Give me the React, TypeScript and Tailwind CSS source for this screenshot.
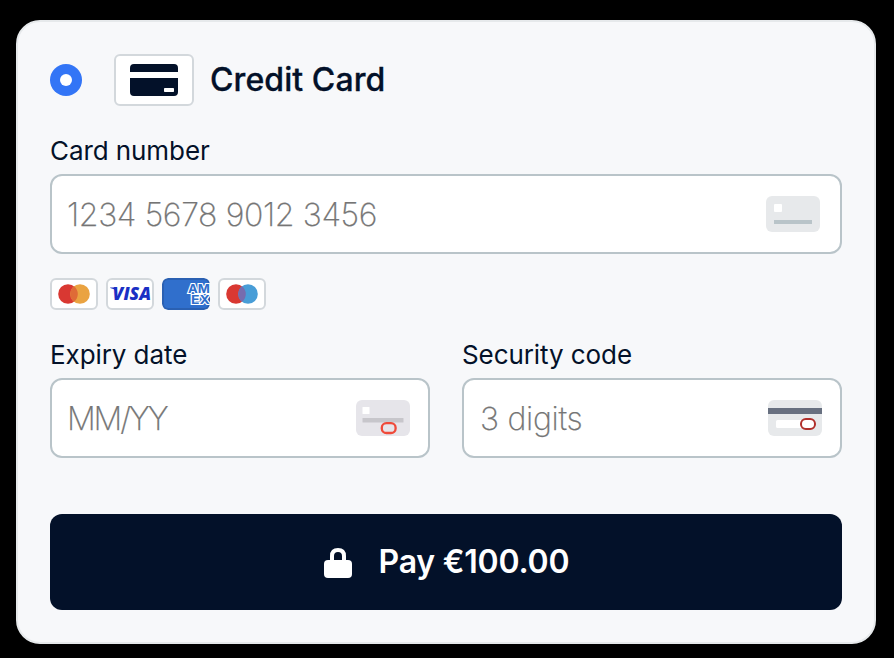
import type { ReactNode } from "react";

function CardChip() {
  return (
    <div className="flex h-[52px] w-20 items-center justify-center rounded-md border-2 border-[#d3d8dc] bg-white">
      <svg width="48" height="32" viewBox="0 0 48 32">
        <path d="M4 0H44Q48 0 48 4V8H0V4Q0 0 4 0ZM0 14H48V28Q48 32 44 32H4Q0 32 0 28Z" fill="#031129" />
        <rect x="34" y="24" width="10" height="4" rx="0.7" fill="#fff" />
      </svg>
    </div>
  );
}

function BrandFrame({ children }: { children: ReactNode }) {
  return (
    <div className="h-8 w-12 overflow-hidden rounded-md border-2 border-[#d3d8dc] bg-white">
      {children}
    </div>
  );
}

function Circles({ right, overlap }: { right: string; overlap: string }) {
  return (
    <svg width="44" height="28" viewBox="0 0 44 28">
      <circle cx="16" cy="14" r="9.8" fill="#d93832" />
      <circle cx="28" cy="14" r="9.8" fill={right} />
      <path d="M22 6.25A9.8 9.8 0 0 1 22 21.75A9.8 9.8 0 0 1 22 6.25Z" fill={overlap} />
    </svg>
  );
}

function Visa() {
  return (
    <svg width="44" height="28" viewBox="0 0 44 28">
      <text x="4.6" y="20.3" textLength="38.4" lengthAdjust="spacingAndGlyphs" fontFamily="Open Sans" fontSize="17.5" fontWeight="800" fontStyle="italic" fill="#1a2fc4">VISA</text>
      <path d="M2.2 7.6H8L9 12Q6.5 8.6 2.2 8Z" fill="#1a2fc4" />
    </svg>
  );
}

function Amex() {
  return (
    <svg className="rounded-md" width="48" height="32" viewBox="0 0 48 32" fontFamily="Inter" fontSize="12" fontWeight="700" fill="#306fcc">
      <rect x="1" y="1" width="46" height="30" rx="5" stroke="#2a60b2" strokeWidth="2" />
      <g stroke="#fff" strokeWidth="2.2" paintOrder="stroke">
        <text x="26" y="15.3" textLength="21.8" lengthAdjust="spacingAndGlyphs">AM</text>
        <text x="29" y="26" textLength="18.8" lengthAdjust="spacingAndGlyphs">EX</text>
      </g>
    </svg>
  );
}

function NumberIcon() {
  return (
    <svg width="54" height="36" viewBox="0 0 54 36">
      <rect width="54" height="36" rx="6" fill="#e7e9eb" />
      <rect x="8" y="8" width="8" height="8" rx="1" fill="#fff" />
      <rect x="8" y="24" width="38" height="4" fill="#b9c4c9" />
    </svg>
  );
}

function ExpiryIcon() {
  return (
    <svg width="54" height="36" viewBox="0 0 54 36">
      <rect width="54" height="36" rx="6" fill="#e6e5ea" />
      <rect x="6.5" y="7" width="7" height="7" rx="0.5" fill="#fff" />
      <rect x="6.5" y="18" width="41" height="4.5" rx="0.6" fill="#c7c6cb" />
      <rect x="25.8" y="23.2" width="13.8" height="9.8" rx="4.6" fill="#e6e5ea" stroke="#ef4a3a" strokeWidth="2.3" />
    </svg>
  );
}

function SecurityIcon() {
  return (
    <svg width="54" height="36" viewBox="0 0 54 36">
      <rect width="54" height="36" rx="6" fill="#e7e9eb" />
      <rect y="8" width="54" height="6" fill="#687080" />
      <rect x="8" y="20" width="34" height="8" rx="1.6" fill="#fff" />
      <rect x="33" y="19" width="14" height="10" rx="4.8" fill="#fff" stroke="#b0302c" strokeWidth="2" />
    </svg>
  );
}

type FieldProps = { label: string; hint: string; icon: ReactNode; inset?: string; tracking: string };

function Field({ label, hint, icon, inset = "pl-[15px] pr-5", tracking }: FieldProps) {
  return (
    <label className="flex min-w-0 flex-1 flex-col">
      <span className="flex h-9 items-center pb-[3px] text-[26px] leading-8 tracking-[-0.08px] text-[#031129]">{label}</span>
      <span className={"mt-1 flex h-20 items-center justify-between rounded-xl border-2 border-[#b9c4c9] bg-white " + inset}>
        <span className={"pt-0.5 text-[32px] leading-10 font-extralight whitespace-nowrap text-[#757575] [-webkit-text-stroke:0.25px_#757575] " + tracking}>{hint}</span>
        {icon}
      </span>
    </label>
  );
}

export default function App() {
  return (
    <div className="h-[658px] w-[894px] bg-black px-4 pt-5 font-['Inter',sans-serif]">
      <main className="flex h-[624px] w-[860px] flex-col rounded-3xl border-2 border-[#e6e9eb] bg-[#f7f8fa] px-8 pt-8">
        <header className="flex h-[52px] items-center">
          <span className="flex size-8 items-center justify-center rounded-full bg-[#3375f6]">
            <span className="size-3 rounded-full bg-white" />
          </span>
          <div className="ml-8">
            <CardChip />
          </div>
          <h1 className="ml-4 text-[32px] leading-10 font-medium tracking-[0.08px] text-[#031129] [-webkit-text-stroke:0.3px_#031129]">Credit Card</h1>
        </header>
        <div className="mt-7 flex">
          <Field label="Card number" hint="1234 5678 9012 3456" tracking="tracking-[-0.36px]" icon={<NumberIcon />} />
        </div>
        <div className="mt-6 flex gap-2">
          <BrandFrame><Circles right="#eaa341" overlap="#df6b37" /></BrandFrame>
          <BrandFrame><Visa /></BrandFrame>
          <Amex />
          <BrandFrame><Circles right="#489dd7" overlap="#776cae" /></BrandFrame>
        </div>
        <div className="mt-7 flex gap-8">
          <Field label="Expiry date" hint="MM/YY" tracking="tracking-[-2.1px]" icon={<ExpiryIcon />} inset="pl-[15px] pr-[18px]" />
          <Field label="Security code" hint="3 digits" tracking="tracking-[-0.3px]" icon={<SecurityIcon />} inset="pl-4 pr-[18px]" />
        </div>
        <button className="mt-14 flex h-24 shrink-0 items-center justify-center rounded-xl bg-[#031129] text-[32px] leading-10 font-semibold text-white">
          <svg className="mt-0.5 mr-[27px]" width="28" height="30" viewBox="0 0 28 30">
            <path d="M8 14V8Q8 2 14 2Q20 2 20 8V14" fill="none" stroke="#fff" strokeWidth="4" />
            <rect y="12" width="28" height="18" rx="4" fill="#fff" />
          </svg>
          <span className="-mr-px tracking-[-0.22px]">Pay €100.00</span>
        </button>
      </main>
    </div>
  );
}
